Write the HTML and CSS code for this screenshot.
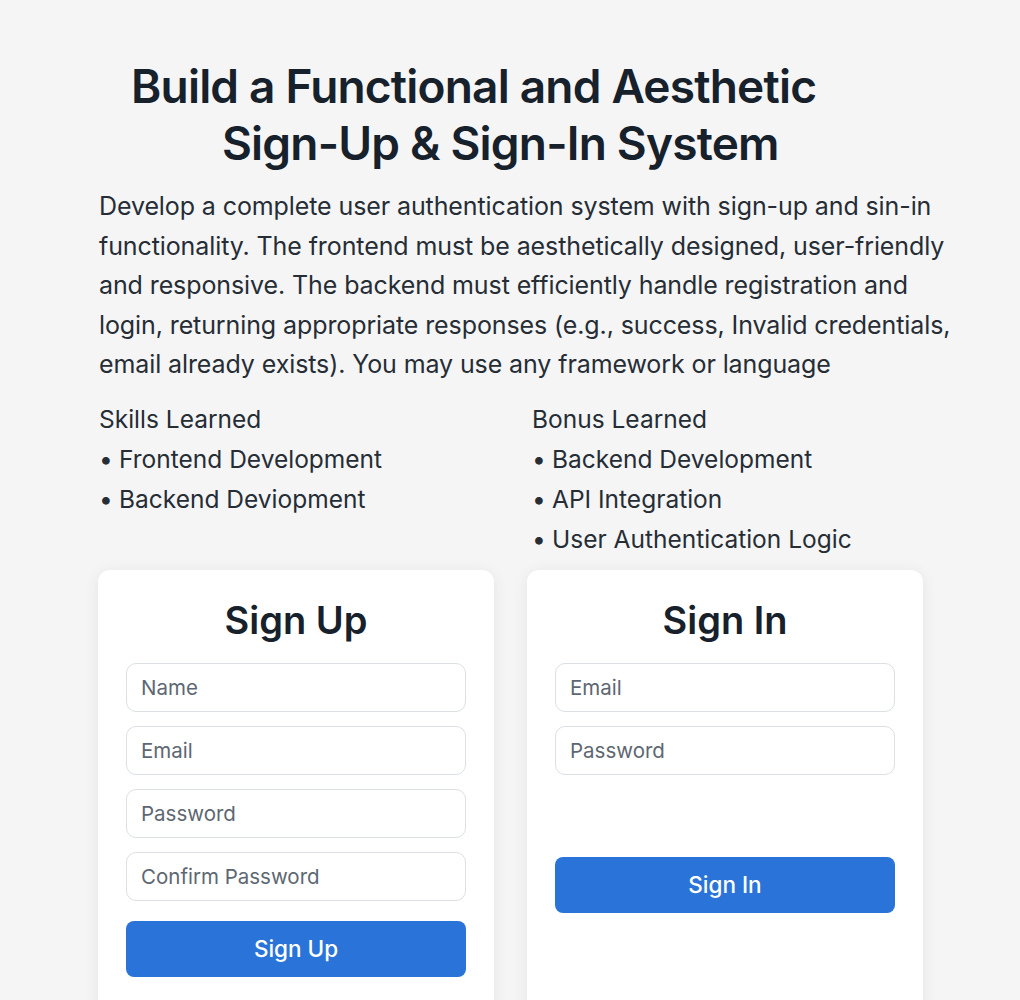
FILE: index.html
```html
<!DOCTYPE html>
<html>
<head>
<meta charset="utf-8">
<link rel="stylesheet" href="styles.css">
</head>
<body>
<main class="page">
  <h1 class="title">
    <span class="title-line1">Build a Functional and Aesthetic</span>
    <span class="title-line2">Sign-Up &amp; Sign-In System</span>
  </h1>
  <p class="intro">Develop a complete user authentication system with sign-up and sin-in<br>functionality. The frontend must be aesthetically designed, user-friendly<br>and responsive. The backend must efficiently handle registration and<br>login, returning appropriate responses (e.g., success, Invalid credentials,<br>email already exists). You may use any framework or language</p>
  <section class="lists">
    <div class="list-col">
      <h2 class="list-title">Skills Learned</h2>
      <ul class="list">
        <li>Frontend Development</li>
        <li>Backend Deviopment</li>
      </ul>
    </div>
    <div class="list-col">
      <h2 class="list-title">Bonus Learned</h2>
      <ul class="list">
        <li>Backend Development</li>
        <li>API Integration</li>
        <li>User Authentication Logic</li>
      </ul>
    </div>
  </section>
  <section class="cards">
    <form class="card">
      <h3 class="card-title">Sign Up</h3>
      <div class="fields">
        <input class="field" type="text" placeholder="Name">
        <input class="field" type="email" placeholder="Email">
        <input class="field" type="password" placeholder="Password">
        <input class="field" type="password" placeholder="Confirm Password">
      </div>
      <button class="btn" type="button">Sign Up</button>
    </form>
    <form class="card">
      <h3 class="card-title">Sign In</h3>
      <div class="fields">
        <input class="field" type="email" placeholder="Email">
        <input class="field" type="password" placeholder="Password">
      </div>
      <button class="btn btn-signin" type="button">Sign In</button>
    </form>
  </section>
</main>
</body>
</html>
```
FILE: styles.css
```css
* { box-sizing: border-box; }
html, body { margin: 0; padding: 0; }
body {
  background: #f5f5f6;
  font-family: Inter, "Noto Sans", sans-serif;
  color: #1f2730;
}
.page {
  padding: 58px 0 0 99px;
  width: 1000px;
}
.title {
  margin: 0;
  font-size: 46px;
  font-weight: 600;
  line-height: 57px;
  color: #17212b;
  letter-spacing: -0.8px;
}
.title span { display: block; }
.title-line1 { padding-left: 32px; }
.title-line2 { padding-left: 123px; }
.intro {
  margin: 15px 0 0 0;
  width: 900px;
  white-space: nowrap;
  font-size: 25px;
  line-height: 39.5px;
  color: #262d35;
  letter-spacing: -0.1px;
}
.lists {
  display: grid;
  grid-template-columns: 433px 1fr;
  margin-top: 14px;
}
.list-title {
  margin: 0;
  font-size: 24.5px;
  font-weight: 400;
  line-height: 40px;
  color: #262d35;
}
.list {
  margin: 0;
  padding: 0;
  list-style: none;
  font-size: 24.5px;
  line-height: 40px;
  color: #262d35;
}
.list li::before {
  content: "•";
  display: inline-block;
  width: 20px;
}
.cards {
  display: flex;
  gap: 33px;
  margin-top: 11px;
  margin-left: -1px;
}
.card {
  width: 396px;
  height: 460px;
  background: #fff;
  border-radius: 12px;
  box-shadow: 0 2px 16px rgba(0,0,0,0.07);
  padding: 24px 28px 0 28px;
  margin: 0;
}
.card-title {
  margin: 0;
  text-align: center;
  font-size: 38px;
  font-weight: 600;
  line-height: 52px;
  color: #17212b;
}
.fields {
  display: flex;
  flex-direction: column;
  gap: 14px;
  margin-top: 17px;
}
.field {
  width: 340px;
  height: 49px;
  border: 1px solid #dcdfe3;
  border-radius: 10px;
  padding: 0 14px;
  font-family: Inter, "Noto Sans", sans-serif;
  font-size: 20.5px;
  color: #1f2730;
  background: #fff;
  outline: none;
}
.field::placeholder { color: #5d6772; }
.btn {
  display: block;
  width: 340px;
  height: 56px;
  margin-top: 20px;
  border: none;
  border-radius: 8px;
  background: #2a74d9;
  color: #fff;
  font-family: Inter, "Noto Sans", sans-serif;
  font-size: 22.5px;
  font-weight: 500;
}
.btn-signin {
  margin-top: 82px;
}
```
